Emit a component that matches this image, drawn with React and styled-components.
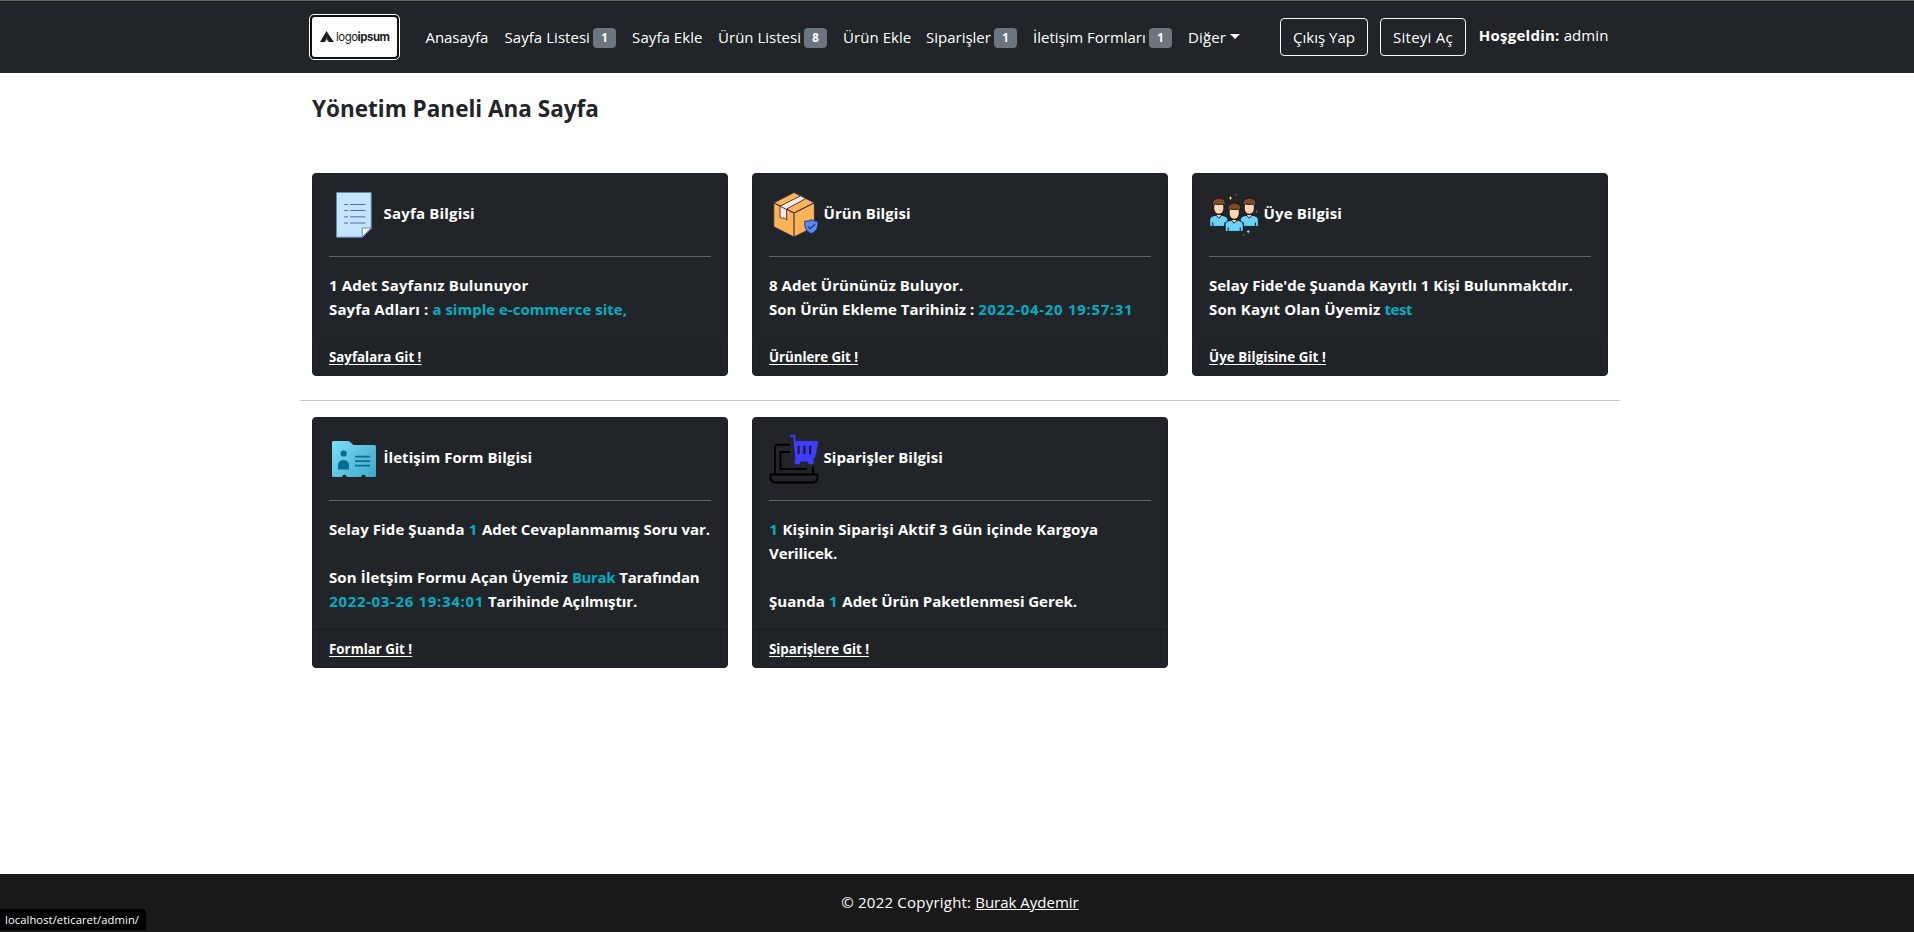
import React from "react";
import styled, { createGlobalStyle } from "styled-components";

const GlobalStyle = createGlobalStyle`
  *, *::before, *::after { box-sizing: border-box; }
  body {
    margin: 0;
    overflow: hidden;
    background: #fff;
    color: #212529;
    font-family: "Segoe UI", "Open Sans", "Noto Sans", sans-serif;
    font-size: 15px;
    line-height: 24px;
  }
  a { color: inherit; }
`;

const Page = styled.div`
  width: 1920px;
  height: 932px;
  display: flex;
  flex-direction: column;
`;

const Track = styled.span`
  letter-spacing: ${(p) => p.$ls || 0}px;
  white-space: nowrap;
`;

/* Navigation */
const Navbar = styled.header`
  height: 73px;
  flex: none;
  background: #212529;
  border-top: 1px solid #5f6862;
  box-shadow: inset 0 1px 0 #191c1f;
  color: #fff;
`;
const NavInner = styled.div`
  width: 1320px;
  height: 100%;
  margin: 0 auto;
  padding: 0 12px 0 9px;
  display: flex;
  align-items: center;
`;
const Brand = styled.a`
  width: 91px;
  height: 46px;
  flex: none;
  border: 1px solid #fff;
  border-radius: 5px;
  background: #101010;
  padding: 2px;
  display: flex;
  text-decoration: none;
`;
const BrandPlate = styled.span`
  flex: 1;
  display: flex;
  align-items: center;
  gap: 2px;
  padding: 0 0 1px 8px;
  border-radius: 3px;
  background: #fff;
  color: #1b1b1b;
  font: 400 11.4px/14px Inter, "Open Sans", sans-serif;
  letter-spacing: -0.45px;
  b { font-weight: 700; }
  svg { flex: none; }
`;
const Menu = styled.nav`
  display: flex;
  align-items: center;
  margin-left: 17.6px;
`;
const MenuLink = styled.a`
  display: flex;
  align-items: center;
  width: ${(p) => p.$w}px;
  padding: 8px 0 8px 8px;
  text-decoration: none;
  white-space: nowrap;
`;
const Badge = styled.span`
  width: 23px;
  height: 20px;
  margin: 2px 8px 0 auto;
  border-radius: 4px;
  background: #6c757d;
  font-size: 11.5px;
  font-weight: 700;
  line-height: 20px;
  text-align: center;
`;
const Caret = styled.span`
  margin: 0 0 1px 4.5px;
  border: 5px solid transparent;
  border-top-color: #fff;
  border-bottom: 0;
`;
const Account = styled.div`
  display: flex;
  align-items: center;
  margin-left: auto;
`;
const OutlineButton = styled.button`
  width: ${(p) => p.$w}px;
  height: 38px;
  margin-right: 12px;
  padding: 0;
  border: 1px solid #f8f9fa;
  border-radius: 4px;
  background: transparent;
  color: #fff;
  font: inherit;
`;
const Welcome = styled.div`
  display: flex;
  gap: 4px;
  width: 130px;
  padding: 0 0 5px 0.8px;
`;

/* Content */
const Main = styled.main`
  width: 1320px;
  margin: 0 auto;
  flex: 1;
`;
const Heading = styled.h1`
  margin: 21px 12px 50px;
  font-size: 22.5px;
  font-weight: 700;
  line-height: 29px;
`;
const CardRow = styled.section`
  display: grid;
  grid-template-columns: repeat(3, 416px);
  gap: 24px;
  padding: 0 12px;
`;
const Divider = styled.hr`
  height: 1px;
  border: 0;
  margin: 24px 0 16px;
  background: #c8c9ca;
`;
const Card = styled.article`
  border: 1px solid #1c2023;
  border-radius: 4px;
  background: #212529;
  color: #fff;
  font-weight: 700;
`;
const CardBody = styled.div`
  padding: 16px;
`;
const CardHead = styled.div`
  display: flex;
  align-items: center;
  gap: 4.5px;
  height: 50px;
  svg { flex: none; }
`;
const CardTitle = styled.h2`
  margin: 0;
  padding-bottom: 5px;
  font: inherit;
`;
const CardRule = styled.hr`
  height: 1px;
  border: 0;
  margin: 16px 0;
  background: #5e6263;
`;
const Line = styled.p`
  height: 24px;
  margin: 0;
  white-space: nowrap;
`;
const Accent = styled.span`
  margin: 0 0.2px;
  color: #03adc0;
  letter-spacing: ${(p) => p.$ls || 0}px;
`;
const CardFooter = styled.footer`
  height: 38px;
  padding: 9px 16px 7px;
  border-top: 1px solid #1a1e21;
  background: #202428;
  border-radius: 0 0 3px 3px;
  font-size: 13.3px;
  line-height: 21px;
  a { text-underline-offset: 1.5px; }
`;

/* Page footer */
const PageFooter = styled.footer`
  height: 58px;
  flex: none;
  padding: 16px;
  background: #191919;
  color: #fff;
  text-align: center;
`;
const StatusBubble = styled.div`
  position: absolute;
  left: 0;
  top: 909px;
  width: 146px;
  height: 21px;
  padding-left: 5px;
  border-radius: 0 4px 0 0;
  background: #000;
  color: #fff;
  font-size: 11.25px;
  line-height: 22px;
  white-space: nowrap;
`;

const Icon = ({ children }) => (
  <svg width="50" height="50" viewBox="0 0 50 50" fill="none">{children}</svg>
);

const PageIcon = () => (
  <Icon>
    <path d="M7.5 2.5h34.7v36L33.5 47.2H7.5z" fill="#c3e5ff" stroke="#6586b8" />
    <path d="M33.2 47V38h9z" fill="#fff" stroke="#6586b8" />
    <path d="M15 14.5h4M21 14.5h15.5M15 20.5h4M21 20.5h15.5" stroke="#4f74b5" strokeWidth="1.1" />
    <path d="M15 26.8h4M21 26.8h15.5M15 33h4M21 33h15.5" stroke="#7795c6" strokeWidth="1.4" />
  </Icon>
);

const BoxIcon = () => (
  <Icon>
    <g stroke="#2b2c4b" strokeWidth="0.9" strokeLinejoin="round">
      <path d="M25 2.5 45.4 12.8v24L25 47 4.8 36.8v-24z" fill="#ffb357" />
      <path d="M4.8 12.8 25 23l20.4-10.2M25 23v24" strokeWidth="1.1" />
      <path d="M31.6 5.8 36.8 8.5 17.6 19v11.2l-2.4-2.5-1.6 1-2.6-1.6V16.2z" fill="#fdebd9" />
      <path d="M11 16.2 17.6 19.5" />
      <path d="M42.3 29.6c2 1.4 4.2 1.7 6.5 1.6.7 6.2-1.5 10.3-6.5 12.4-5-2.1-7.2-6.2-6.5-12.4 2.3.1 4.5-.2 6.5-1.6z" fill="#5289ff" />
      <path d="m39.2 36.6 2.2 2.1 4.6-4.6" strokeWidth="1.2" />
    </g>
  </Icon>
);

const Person = ({ x, y }) => (
  <g transform={`translate(${x} ${y})`} stroke="#0b0b0b" strokeLinejoin="round">
    <path d="M-9 20v-7q.2-3 3.500-3.500L-2 8.600h4l3.500.9q3.300.5 3.500 3.500v7z" fill="#6bd3fb" strokeWidth=".8" />
    <path d="M-6 16v4M6 16v4" strokeWidth=".9" />
    <path d="M-3 8.600 0 11.800l3-3.200" fill="#ffd5b8" strokeWidth=".9" />
    <path d="M-5-2v4.200Q-4.600 7.500 0 7.800 4.600 7.500 5 2.200V-2q-2-2.300-5-2.300T-5-2z" fill="#ffd3b3" strokeWidth=".8" />
    <path d="M-5.900 0q-1.500-5.500 1.800-7.200Q0-9.600 4.200-7.400 7.700-5.300 5.900 0L4.300-2.200Q-1-1.400-4-2.400z" fill="#7d4b2c" strokeWidth=".8" />
  </g>
);

const UsersIcon = () => (
  <Icon>
    <Person x={9.8} y={16.4} />
    <Person x={40.3} y={16.4} />
    <Person x={25.2} y={21.4} />
    <path d="M21.5 6.600v3M20 8.100h3" stroke="#f5ce45" />
    <path d="M39.300 40v3.200M37.700 41.600h3.200" stroke="#6bd3fb" />
    <path d="M27.300 4v1.400M34.800 44v1.600" stroke="#627a45" strokeWidth="1.4" />
    <path d="M47.500 20.500v2" stroke="#e8475c" strokeWidth="1.2" />
  </Icon>
);

const FolderIcon = () => (
  <Icon>
    <defs>
      <linearGradient id="folder" x1="5" y1="7" x2="45" y2="43" gradientUnits="userSpaceOnUse">
        <stop stopColor="#7ddcf8" />
        <stop offset="1" stopColor="#3fa8ca" />
      </linearGradient>
    </defs>
    <path d="M4.5 7h14.2q1.5 0 2.5 1l3.2 3H45.5Q47 11 47 12.5v29Q47 43 45.5 43H37q-.8-2.6-2.5-2.6T32 43H18q-.8-2.6-2.5-2.6T13 43H4.5Q3 43 3 41.5v-33Q3 7 4.5 7z" fill="url(#folder)" />
    <circle cx="14.6" cy="19.5" r="3.1" fill="#0a6c94" />
    <path d="M9 35.5V30.5a5.600 5.600 0 0 1 11 0v5z" fill="#0a6c94" />
    <path d="M26 22.700h15M26 27.200h15M26 31.700h15" stroke="#0a6c94" strokeWidth="1.7" />
  </Icon>
);

const OrderIcon = () => (
  <Icon>
    <g stroke="#000" strokeWidth="2" strokeLinejoin="round">
      <path d="M21 10.7H8.5Q6 10.7 6 13.2V40" />
      <path d="M21 18h-9.5v17H37.5M44 32.5V40" />
      <path d="M1.5 40.5h47v2.5q0 5.5-5 5.5H6.5q-5 0-5-5.5z" />
    </g>
    <path d="M21 1.7h4.2l2.3 24" stroke="#403cff" strokeWidth="2" />
    <path d="M25.5 7H47.5Q49.3 7 49 8.8L46.5 22.3Q46 25 43.5 25H27.2z" fill="#403cff" />
    <path d="M29 25h13v2.500H29z" fill="#403cff" />
    <circle cx="28.5" cy="27.6" r="3" fill="#403cff" />
    <circle cx="41.7" cy="27.6" r="3" fill="#403cff" />
    <path d="M29.600 12.500v7M35.400 12.500v7M41.200 12.500v7" stroke="#171a2b" strokeWidth="2.1" strokeLinecap="round" />
  </Icon>
);

const menu = [
  { text: "Anasayfa", ls: -0.08, w: 79 },
  { text: "Sayfa Listesi", ls: 0.04, w: 127.5, badge: 1 },
  { text: "Sayfa Ekle", ls: 0.07, w: 86 },
  { text: "Ürün Listesi", ls: 0, w: 125, badge: 8 },
  { text: "Ürün Ekle", ls: 0.04, w: 83 },
  { text: "Siparişler", ls: -0.02, w: 107, badge: 1 },
  { text: "İletişim Formları", ls: -0.03, w: 155, badge: 1 },
];

function InfoCard({ icon, title, ls, link, linkLs, children }) {
  return (
    <Card>
      <CardBody>
        <CardHead>
          {icon}
          <CardTitle><Track $ls={ls}>{title}</Track></CardTitle>
        </CardHead>
        <CardRule />
        {children}
      </CardBody>
      <CardFooter>
        <a href="#"><Track $ls={linkLs}>{link}</Track></a>
      </CardFooter>
    </Card>
  );
}

export default function App() {
  return (
    <Page>
      <GlobalStyle />
      <Navbar>
        <NavInner>
          <Brand href="#">
            <BrandPlate>
              <svg width="14" height="11" viewBox="0 0 14 11">
                <path d="M6.5 0 10 5.5 14 11H8.5L6.5 8 5 11H0z" fill="#1b1b1b" />
                <path d="M5.3 11 7.3 5.5M8.7 11 7.6 8" stroke="#999" strokeWidth=".6" />
              </svg>
              <span>logo<b>ipsum</b></span>
            </BrandPlate>
          </Brand>
          <Menu>
            {menu.map((m) => (
              <MenuLink key={m.text} href="#" $w={m.w}>
                <Track $ls={m.ls}>{m.text}</Track>
                {m.badge && <Badge>{m.badge}</Badge>}
              </MenuLink>
            ))}
            <MenuLink href="#" $w={69}>
              <Track $ls={0.1}>Diğer</Track>
              <Caret />
            </MenuLink>
          </Menu>
          <Account>
            <OutlineButton $w={88}><Track>Çıkış Yap</Track></OutlineButton>
            <OutlineButton $w={86}><Track $ls={0.25}>Siteyi Aç</Track></OutlineButton>
            <Welcome>
              <b><Track $ls={0.25}>Hoşgeldin:</Track></b>
              <Track $ls={0.08}>admin</Track>
            </Welcome>
          </Account>
        </NavInner>
      </Navbar>

      <Main>
        <Heading>Yönetim Paneli Ana Sayfa</Heading>
        <CardRow>
          <InfoCard icon={<PageIcon />} title="Sayfa Bilgisi" ls={0.18} link="Sayfalara Git !" linkLs={0}>
            <Line><Track $ls={0.11}>1 Adet Sayfanız Bulunuyor</Track></Line>
            <Line><Track $ls={0.12}>Sayfa Adları :</Track> <Accent>a simple e-commerce site,</Accent></Line>
          </InfoCard>
          <InfoCard icon={<BoxIcon />} title="Ürün Bilgisi" ls={0.1} link="Ürünlere Git !" linkLs={-0.04}>
            <Line><Track $ls={0.03}>8 Adet Ürününüz Buluyor.</Track></Line>
            <Line>Son Ürün Ekleme Tarihiniz : <Accent $ls={0.68}>2022-04-20 19:57:31</Accent></Line>
          </InfoCard>
          <InfoCard icon={<UsersIcon />} title="Üye Bilgisi" ls={0.15} link="Üye Bilgisine Git !" linkLs={0.1}>
            <Line>Selay Fide'de Şuanda Kayıtlı 1 Kişi Bulunmaktdır.</Line>
            <Line><Track $ls={0.14}>Son Kayıt Olan Üyemiz</Track> <Accent $ls={-0.5}>test</Accent></Line>
          </InfoCard>
        </CardRow>
        <Divider />
        <CardRow>
          <InfoCard icon={<FolderIcon />} title="İletişim Form Bilgisi" ls={0.06} link="Formlar Git !" linkLs={0.02}>
            <Line>
              <Track $ls={0.1}>Selay Fide Şuanda</Track> <Accent $ls={0.66}>1</Accent>{" "}
              <Track $ls={-0.05}>Adet Cevaplanmamış Soru var.</Track>
            </Line>
            <Line />
            <Line>
              <Track $ls={0.1}>Son İletşim Formu Açan Üyemiz</Track> <Accent $ls={-0.4}>Burak</Accent>{" "}
              <Track $ls={-0.2}>Tarafından</Track>
            </Line>
            <Line><Accent $ls={0.66}>2022-03-26 19:34:01</Accent> <Track $ls={-0.13}>Tarihinde Açılmıştır.</Track></Line>
          </InfoCard>
          <InfoCard icon={<OrderIcon />} title="Siparişler Bilgisi" ls={0.03} link="Siparişlere Git !" linkLs={-0.03}>
            <Line><Accent $ls={0.66}>1</Accent> <Track $ls={0.11}>Kişinin Siparişi Aktif 3 Gün içinde Kargoya</Track></Line>
            <Line><Track $ls={-0.11}>Verilicek.</Track></Line>
            <Line />
            <Line>
              <Track $ls={0.05}>Şuanda</Track> <Accent $ls={0.66}>1</Accent>{" "}
              <Track $ls={-0.04}>Adet Ürün Paketlenmesi Gerek.</Track>
            </Line>
          </InfoCard>
        </CardRow>
      </Main>

      <PageFooter>
        <Track $ls={0.22}>© 2022 Copyright:</Track> <a href="#">Burak Aydemir</a>
      </PageFooter>
      <StatusBubble><Track $ls={0.06}>localhost/eticaret/admin/</Track></StatusBubble>
    </Page>
  );
}
